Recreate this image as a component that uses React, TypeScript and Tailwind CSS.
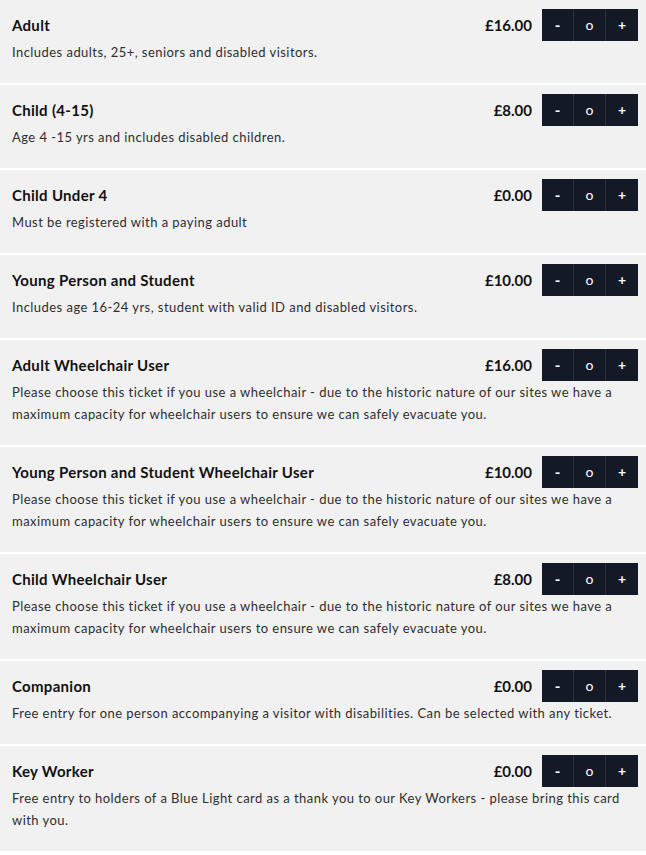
import { useState } from "react";

const tickets = [
  { name: "Adult", price: "£16.00", info: "Includes adults, 25+, seniors and disabled visitors." },
  { name: "Child (4-15)", price: "£8.00", info: "Age 4 -15 yrs and includes disabled children." },
  { name: "Child Under 4", price: "£0.00", info: "Must be registered with a paying adult" },
  { name: "Young Person and Student", price: "£10.00", info: "Includes age 16-24 yrs, student with valid ID and disabled visitors." },
  {
    name: "Adult Wheelchair User",
    price: "£16.00",
    info: "Please choose this ticket if you use a wheelchair - due to the historic nature of our sites we have a maximum capacity for wheelchair users to ensure we can safely evacuate you.",
  },
  {
    name: "Young Person and Student Wheelchair User",
    price: "£10.00",
    info: "Please choose this ticket if you use a wheelchair - due to the historic nature of our sites we have a maximum capacity for wheelchair users to ensure we can safely evacuate you.",
  },
  {
    name: "Child Wheelchair User",
    price: "£8.00",
    info: "Please choose this ticket if you use a wheelchair - due to the historic nature of our sites we have a maximum capacity for wheelchair users to ensure we can safely evacuate you.",
  },
  { name: "Companion", price: "£0.00", info: "Free entry for one person accompanying a visitor with disabilities. Can be selected with any ticket." },
  {
    name: "Key Worker",
    price: "£0.00",
    info: "Free entry to holders of a Blue Light card as a thank you to our Key Workers - please bring this card with you.",
  },
];

function Counter() {
  const [count, setCount] = useState(0);
  return (
    <div className="flex h-8 bg-[#131925] text-white">
      <button
        className="w-8 border-r border-[#2b3240] text-[15px] font-bold leading-none"
        onClick={() => setCount((c) => Math.max(0, c - 1))}
      >
        -
      </button>
      <span className="flex w-8 items-center justify-center border-r border-[#2b3240] text-[14px] leading-none">
        {count === 0 ? "o" : count}
      </span>
      <button className="w-8 text-[14px] font-bold leading-none" onClick={() => setCount((c) => c + 1)}>
        +
      </button>
    </div>
  );
}

export default function App() {
  return (
    <div className="flex w-[646px] flex-col gap-[2px] bg-white font-['Lato',sans-serif]">
      {tickets.map((t) => (
        <div key={t.name} className="bg-[#f1f1f1] pb-5 pl-3 pr-2 pt-[9px]">
          <div className="flex h-8 items-center justify-between">
            <h3 className="text-[15px] font-bold tracking-[0.3px] text-[#111111]">{t.name}</h3>
            <div className="flex items-center gap-[10px]">
              <span className="text-[15px] font-bold text-[#111111]">{t.price}</span>
              <Counter />
            </div>
          </div>
          <p className="pr-2 text-[13px] leading-[22px] tracking-[0.45px] text-[#2e2e2e]">{t.info}</p>
        </div>
      ))}
    </div>
  );
}
